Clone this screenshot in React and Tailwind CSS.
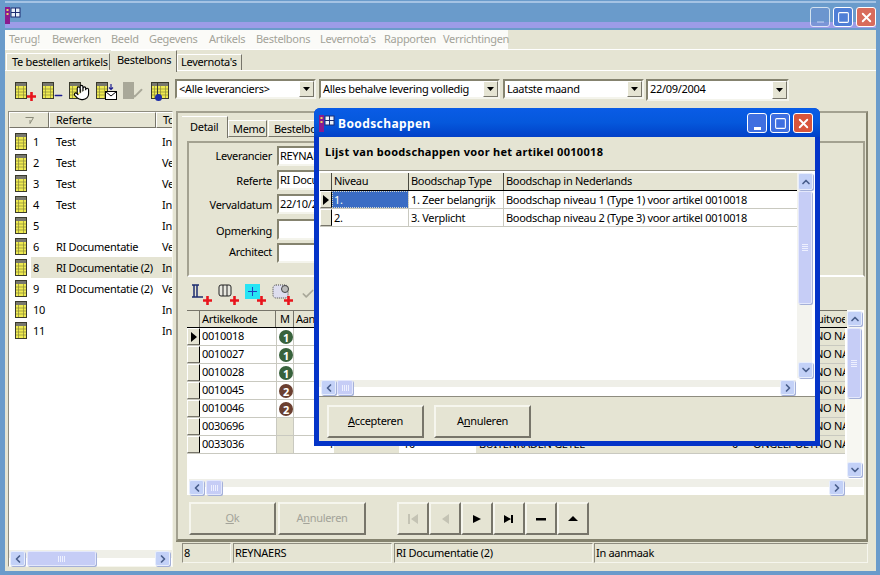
import { ChevronDown, ChevronLeft, ChevronRight, ChevronUp, Check, Hand, Minus, Square, X } from 'lucide-react';

const FACE = 'bg-[#e5e4d3]';
const RAISED = 'border border-t-white border-l-white border-r-[#77756a] border-b-[#77756a]';
const BUTTON = 'border-2 border-t-[#f6f6ee] border-l-[#f6f6ee] border-r-[#77756a] border-b-[#77756a] bg-[#e5e4d3]';
const SUNKEN = 'border border-t-[#8e8c7f] border-l-[#8e8c7f] border-b-[#f6f6ee] border-r-[#f6f6ee]';
const FIELD = 'border-2 border-t-[#85836f] border-l-[#85836f] border-b-[#f4f4ec] border-r-[#f4f4ec] bg-white';

function TableIcon({ className }) {
  return (
    <svg className={className} width="12" height="17" viewBox="0 0 12 17">
      <rect x="0.5" y="0.5" width="11" height="16" fill="#eeea50" stroke="#3a3a2c" />
      <rect x="1" y="1" width="10" height="3" fill="#77776e" />
      <path d="M3.5 4v12M8.5 4v12M1 7h10M1 10h10M1 13h10" stroke="#8a8a3a" strokeWidth="0.7" />
    </svg>
  );
}

function RedPlus({ className }) {
  return (
    <svg className={className} width="9" height="9" viewBox="0 0 9 9">
      <path d="M3.2 0h2.6v3.2H9v2.6H5.8V9H3.2V5.8H0V3.2h3.2z" fill="#e8141c" />
    </svg>
  );
}

function ScrollButton({ className, Icon }) {
  return (
    <div className={`absolute flex items-center justify-center rounded-[2px] border border-[#e8eefc] bg-[#c3d1f7] shadow-[1px_1px_0_#a4b0d8] ${className}`}>
      <Icon size={12} strokeWidth={3.4} className="text-[#4a5f8c]" />
    </div>
  );
}

function Thumb({ className, vertical }) {
  return (
    <div className={`absolute flex items-center justify-center gap-[1px] rounded-[2px] border border-[#e4e8fc] bg-[#c6cdf6] shadow-[1px_1px_0_#a4b0d8] ${vertical ? 'flex-col' : ''} ${className}`}>
      {[0, 1, 2, 3].map((i) => (
        <span key={i} className={`bg-[#eef0fe] ${vertical ? 'h-[1px] w-[6px]' : 'h-[6px] w-[1px]'}`} />
      ))}
    </div>
  );
}

function WinButton({ className, tone, children }) {
  return (
    <div className={`absolute flex h-[20px] w-[20px] items-center justify-center rounded-[3px] border border-white text-white ${tone} ${className}`}>
      {children}
    </div>
  );
}

function AppGlyph({ className }) {
  return (
    <svg className={className} width="16" height="17" viewBox="0 0 16 17">
      <rect x="0" y="0" width="5" height="17" fill="#8a1a8e" />
      <rect x="1.5" y="2" width="2" height="2" fill="#e6d060" />
      <rect x="1.5" y="6" width="2" height="2" fill="#e6d060" />
      <rect x="6" y="1" width="9" height="9" fill="#e8f0fa" stroke="#1c2c70" />
      <path d="M10.5 1v9M6 5.5h9" stroke="#1c2c70" />
    </svg>
  );
}

const Label = ({ className, children }) => <div className={`absolute whitespace-nowrap leading-[14px] ${className}`}>{children}</div>;

const LIST = [
  ['1', 'Test', 'In'],
  ['2', 'Test', 'Ve'],
  ['3', 'Test', 'Ve'],
  ['4', 'Test', 'In'],
  ['5', '', 'In'],
  ['6', 'RI Documentatie', 'Ve'],
  ['8', 'RI Documentatie (2)', 'In'],
  ['9', 'RI Documentatie (2)', 'Ve'],
  ['10', '', 'In'],
  ['11', '', 'In'],
];

const ARTICLES = [
  ['0010018', 1],
  ['0010027', 1],
  ['0010028', 1],
  ['0010045', 2],
  ['0010046', 2],
  ['0030696', 0],
  ['0033036', 0],
];

const MENU = ['Terug!', 'Bewerken', 'Beeld', 'Gegevens', 'Artikels', 'Bestelbons', "Levernota's", 'Rapporten', 'Verrichtingen'];

function Combo({ className, text }) {
  return (
    <div className={`absolute ${FIELD} ${className}`}>
      <div className="absolute left-[2px] top-[1px] leading-[14px]">{text}</div>
      <div className={`absolute bottom-[0px] right-[0px] top-[0px] flex w-[15px] items-center justify-center ${FACE} ${RAISED}`}>
        <svg width="7" height="4" viewBox="0 0 7 4"><path d="M0 0h7L3.5 4z" fill="#000" /></svg>
      </div>
    </div>
  );
}

function Nav({ className, disabled, d }) {
  return (
    <div className={`absolute top-[502px] flex h-[33px] w-[32px] items-center justify-center ${BUTTON} ${className}`}>
      <svg width="12" height="10" viewBox="0 0 12 10"><path d={d} fill={disabled ? '#c4c3b4' : '#000'} /></svg>
    </div>
  );
}

export default function App() {
  return (
    <div className="relative h-[575px] w-[880px] overflow-hidden whitespace-nowrap bg-[#e5e4d3] font-['Liberation_Sans',sans-serif] text-[11px] tracking-[-0.3px] text-black">
      {/* main window frame */}
      <div className="absolute left-0 top-0 h-[30px] w-[880px] bg-[#6a9bcb]" />
      <div className="absolute left-0 top-[1px] h-[2px] w-[880px] bg-[#a5c3e4]" />
      <div className="absolute left-0 top-[22px] h-[6px] w-[880px] bg-[#9c9ce8]" />
      <div className="absolute left-0 top-0 h-[575px] w-[5px] bg-[#6a9bcb]" />
      <div className="absolute right-0 top-0 h-[575px] w-[4px] bg-[#6a9bcb]" />
      <div className="absolute bottom-0 left-0 h-[4px] w-[880px] bg-[#6a9bcb]" />
      <AppGlyph className="absolute left-[5px] top-[7px]" />
      <WinButton className="left-[810px] top-[7px] border-[#7aa0d8] opacity-70" tone="bg-[#6d93d0]"><span className="mt-[10px] h-[2px] w-[7px] bg-[#a8c0e8]" /></WinButton>
      <WinButton className="left-[833px] top-[7px]" tone="bg-[#4f7fd6]"><Square size={13} strokeWidth={2} /></WinButton>
      <WinButton className="left-[856px] top-[7px]" tone="bg-[#d86c5c]"><X size={15} strokeWidth={3} /></WinButton>

      {/* menu */}
      <div className="absolute left-[5px] top-[30px] h-[19px] w-[503px] bg-[#fbfbf8]" />
      <div className="absolute left-[5px] top-[49px] h-[1px] w-[871px] bg-white" />
      {MENU.map((m, i) => (
        <Label
          key={m}
          className={`top-[32px] text-[#a3a399] ${['left-[9px]', 'left-[52px]', 'left-[111px]', 'left-[149px]', 'left-[209px]', 'left-[256px]', 'left-[320px]', 'left-[384px]', 'left-[443px]'][i]}`}
        >
          {m}
        </Label>
      ))}

      {/* top tabs */}
      <div className={`absolute left-[6px] top-[53px] h-[18px] w-[104px] ${RAISED}`}><span className="absolute left-[5px] top-[1px] leading-[14px]">Te bestellen artikels</span></div>
      <div className="absolute left-[111px] top-[50px] h-[22px] w-[66px] border-r border-r-[#77756a] border-t border-t-white"><span className="absolute left-[6px] top-[2px] leading-[14px]">Bestelbons</span></div>
      <div className={`absolute left-[177px] top-[54px] h-[17px] w-[65px] ${RAISED}`}><span className="absolute left-[3px] top-[0px] leading-[14px]">Levernota's</span></div>
      <div className="absolute left-[5px] top-[70px] h-[1px] w-[106px] bg-white" />
      <div className="absolute left-[177px] top-[70px] h-[1px] w-[699px] bg-white" />

      {/* toolbar */}
      <TableIcon className="absolute left-[15px] top-[82px]" />
      <RedPlus className="absolute left-[27px] top-[92px]" />
      <TableIcon className="absolute left-[42px] top-[82px]" />
      <Minus size={11} strokeWidth={3} className="absolute left-[53px] top-[90px] text-[#1c1c90]" />
      <TableIcon className="absolute left-[69px] top-[82px]" />
      <Hand size={17} fill="#fff" strokeWidth={1.6} className="absolute left-[73px] top-[84px] text-black" />
      <TableIcon className="absolute left-[96px] top-[82px]" />
      <svg className="absolute left-[105px] top-[84px]" width="12" height="17" viewBox="0 0 12 17">
        <path d="M6 0v5M4 3.5l2 2 2-2" stroke="#1c1c90" strokeWidth="1.2" fill="none" />
        <rect x="0.5" y="7.5" width="11" height="8" fill="#fff" stroke="#000" />
        <path d="M0.5 7.5l5.5 4.5 5.5-4.5" stroke="#000" fill="none" />
      </svg>
      <div className="absolute left-[123px] top-[82px] h-[17px] w-[11px] bg-[#a9a899]" />
      <Check size={15} strokeWidth={3} className="absolute left-[129px] top-[86px] text-[#a9a899]" />
      <TableIcon className="absolute left-[151px] top-[82px]" />
      <TableIcon className="absolute left-[157px] top-[82px]" />
      <div className="absolute left-[155px] top-[94px] h-[7px] w-[7px] rounded-full bg-[#1c2ca8]" />
      <Combo className="left-[175px] top-[79px] h-[20px] w-[141px]" text="<Alle leveranciers>" />
      <Combo className="left-[319px] top-[79px] h-[20px] w-[181px]" text="Alles behalve levering volledig" />
      <Combo className="left-[503px] top-[79px] h-[20px] w-[141px]" text="Laatste maand" />
      <Combo className="left-[646px] top-[79px] h-[22px] w-[143px]" text="22/09/2004" />

      {/* left list */}
      <div className={`absolute left-[8px] top-[111px] h-[456px] w-[165px] bg-white ${SUNKEN}`} />
      <div className={`absolute left-[9px] top-[112px] flex h-[16px] w-[163px] overflow-hidden ${FACE}`}>
        <div className={`flex w-[40px] shrink-0 items-center justify-center text-[#8a8a7a] ${RAISED}`}>
          <svg width="9" height="7" viewBox="0 0 9 7"><path d="M0.5 0.5h8L5 6.5V3" fill="none" stroke="#8a8a7a" /></svg>
        </div>
        <div className={`w-[107px] shrink-0 pl-[6px] leading-[14px] ${RAISED}`}>Referte</div>
        <div className={`w-[30px] shrink-0 pl-[6px] leading-[14px] ${RAISED}`}>Toestand</div>
      </div>
      <div className="absolute left-[9px] top-[131px] w-[163px] overflow-hidden">
        {LIST.map(([nr, ref, type]) => (
          <div key={nr} className="relative h-[21px] w-[163px] overflow-hidden">
            {nr === '8' && <div className={`absolute left-[22px] top-0 h-[21px] w-[141px] ${FACE}`} />}
            <TableIcon className="absolute left-[6px] top-[2px]" />
            <span className="absolute left-[24px] top-[4px] leading-[14px]">{nr}</span>
            <span className="absolute left-[47px] top-[4px] leading-[14px]">{ref}</span>
            <span className="absolute left-[153px] top-[4px] leading-[14px]">{type}</span>
          </div>
        ))}
      </div>
      <div className="absolute left-[9px] top-[550px] h-[8px] w-[163px] bg-[#efefe8]" />
      <ScrollButton className="left-[10px] top-[551px] h-[15px] w-[15px]" Icon={ChevronLeft} />
      <Thumb className="left-[27px] top-[551px] h-[15px] w-[69px]" />
      <ScrollButton className="left-[155px] top-[551px] h-[15px] w-[15px]" Icon={ChevronRight} />

      {/* right pane */}
      <div className="absolute left-[176px] top-[111px] h-[430px] w-[692px] border-2 border-t-[#a3a190] border-l-[#a3a190] border-r-[#85836f] border-b-[#85836f]" />
      <div className="absolute left-[182px] top-[116px] h-[22px] w-[46px] border-r border-r-[#77756a] border-t border-t-white"><span className="absolute left-[8px] top-[3px] leading-[14px]">Detail</span></div>
      <div className={`absolute left-[228px] top-[120px] h-[17px] w-[39px] ${RAISED}`}><span className="absolute left-[4px] top-[1px] leading-[14px]">Memo</span></div>
      <div className={`absolute left-[268px] top-[120px] h-[17px] w-[62px] ${RAISED}`}><span className="absolute left-[5px] top-[1px] leading-[14px]">Bestelbons</span></div>
      <div className="absolute left-[187px] top-[141px] h-[136px] w-[678px] border-2 border-t-[#a3a190] border-l-[#a3a190] border-r-[#a3a190] border-b-white" />
      <Label className="right-[608px] top-[149px]">Leverancier</Label>
      <Label className="right-[608px] top-[174px]">Referte</Label>
      <Label className="right-[608px] top-[198px]">Vervaldatum</Label>
      <Label className="right-[608px] top-[224px]">Opmerking</Label>
      <Label className="right-[608px] top-[245px]">Architect</Label>
      <div className={`absolute left-[277px] top-[146px] h-[20px] w-[50px] overflow-hidden pl-[1px] leading-[16px] ${FIELD}`}>REYNAERS</div>
      <div className={`absolute left-[277px] top-[170px] h-[20px] w-[50px] overflow-hidden pl-[1px] leading-[16px] ${FIELD}`}>RI Documentatie</div>
      <div className={`absolute left-[277px] top-[194px] h-[20px] w-[50px] overflow-hidden pl-[1px] leading-[16px] ${FIELD}`}>22/10/2004</div>
      <div className={`absolute left-[277px] top-[219px] h-[21px] w-[50px] ${FIELD}`} />
      <div className={`absolute left-[277px] top-[243px] h-[20px] w-[50px] ${FIELD}`} />

      {/* detail toolbar */}
      <svg className="absolute left-[191px] top-[284px]" width="13" height="14" viewBox="0 0 13 14">
        <path d="M1 1h7M1 13h11M3 1v12M6 1v12" stroke="#1c2c70" strokeWidth="1.5" fill="none" />
      </svg>
      <RedPlus className="absolute left-[203px] top-[296px]" />
      <svg className="absolute left-[218px] top-[284px]" width="14" height="14" viewBox="0 0 14 14">
        <rect x="1" y="1" width="12" height="11" rx="2" fill="#e8e8e0" stroke="#222" />
        <path d="M5 1v11M9 1v11" stroke="#222" />
      </svg>
      <RedPlus className="absolute left-[230px] top-[296px]" />
      <div className="absolute left-[245px] top-[284px] flex h-[15px] w-[15px] items-center justify-center bg-[#27e4f4]">
        <svg width="9" height="9" viewBox="0 0 9 9"><path d="M4.5 0v9M0 4.5h9" stroke="#2040c0" /></svg>
      </div>
      <RedPlus className="absolute left-[257px] top-[296px]" />
      <svg className="absolute left-[272px] top-[284px]" width="18" height="15" viewBox="0 0 18 15">
        <rect x="1" y="1" width="15" height="13" rx="3" fill="#dde" stroke="#444" strokeDasharray="1 1" />
        <circle cx="13" cy="5" r="3.5" fill="#bbb" stroke="#444" />
      </svg>
      <RedPlus className="absolute left-[284px] top-[296px]" />
      <Check size={14} strokeWidth={3} className="absolute left-[301px] top-[287px] text-[#a9a899]" />

      {/* article grid */}
      <div className="absolute left-[187px] top-[310px] h-[185px] w-[677px] bg-white" />
      <div className="absolute left-[187px] top-[310px] h-[1px] w-[660px] bg-[#77756a]" />
      <div className={`absolute left-[187px] top-[311px] flex h-[17px] w-[660px] overflow-hidden border-b border-b-black ${FACE}`}>
        <div className="h-[17px] w-[13px] shrink-0 border-r border-r-[#77756a]" />
        <div className="w-[76px] shrink-0 border-r border-r-[#77756a] pl-[2px] leading-[15px]">Artikelkode</div>
        <div className="w-[18px] shrink-0 border-r border-r-[#77756a] pl-[4px] leading-[15px]">M</div>
        <div className="w-[40px] shrink-0 pl-[2px] leading-[15px]">Aantal</div>
        <div className="absolute left-[625px] top-0 w-[33px] overflow-hidden pl-[5px] leading-[15px]">uitvoe</div>
      </div>
      <div className="absolute left-[187px] top-[328px] w-[658px] overflow-hidden">
        {ARTICLES.map(([code, m], i) => (
          <div key={code} className="relative h-[18px] w-[658px] border-b border-b-[#c9c9c0]">
            <div className={`absolute left-0 top-0 flex h-[17px] w-[13px] items-center justify-center border-r border-r-black ${FACE} ${RAISED}`}>
              {i === 0 && <svg width="6" height="10" viewBox="0 0 6 10"><path d="M0 0l6 5-6 5z" fill="#000" /></svg>}
            </div>
            <span className="absolute left-[15px] top-[1px] leading-[14px]">{code}</span>
            <div className={`absolute left-[89px] top-0 h-[17px] w-[18px] border-x border-x-[#c9c9c0] ${m ? 'bg-white' : FACE}`}>
              {m > 0 && (
                <div className={`absolute left-[2px] top-[2px] flex h-[14px] w-[14px] items-center justify-center rounded-full text-[11px] font-bold leading-none text-white ${m === 1 ? 'bg-[#38623c]' : 'bg-[#6b3f30]'}`}>{m}</div>
              )}
            </div>
            <div className={`absolute left-[147px] top-0 h-[17px] w-[65px] ${FACE}`} />
            <div className={`absolute left-[289px] top-0 h-[17px] w-[369px] ${FACE}`} />
            <span className="absolute left-[628px] top-[1px] w-[30px] overflow-hidden leading-[14px]">NO NA</span>
            {i === 6 && (
              <>
                <span className="absolute left-[141px] top-[1px] leading-[14px]">1</span>
                <span className="absolute left-[216px] top-[1px] leading-[14px]">10</span>
                <span className="absolute left-[292px] top-[1px] leading-[14px]">BUITENRADEN GETEL</span>
                <span className="absolute left-[545px] top-[1px] leading-[14px]">0</span>
                <span className="absolute left-[566px] top-[1px] w-[60px] overflow-hidden leading-[14px]">ONGELPOETIN</span>
              </>
            )}
          </div>
        ))}
      </div>
      <div className="absolute left-[847px] top-[311px] h-[166px] w-[15px] bg-[#f7f7f2]" />
      <ScrollButton className="left-[847px] top-[311px] h-[15px] w-[15px]" Icon={ChevronUp} />
      <Thumb vertical className="left-[847px] top-[328px] h-[70px] w-[14px]" />
      <ScrollButton className="left-[847px] top-[462px] h-[15px] w-[15px]" Icon={ChevronDown} />
      <div className="absolute left-[189px] top-[479px] h-[8px] w-[674px] bg-[#efefe8]" />
      <ScrollButton className="left-[189px] top-[480px] h-[15px] w-[15px]" Icon={ChevronLeft} />
      <Thumb className="left-[206px] top-[480px] h-[15px] w-[16px]" />
      <ScrollButton className="left-[829px] top-[480px] h-[15px] w-[15px]" Icon={ChevronRight} />

      {/* bottom buttons */}
      <div className={`absolute left-[189px] top-[502px] flex h-[33px] w-[87px] items-center justify-center text-[#a3a399] ${BUTTON}`}><span><u>O</u>k</span></div>
      <div className={`absolute left-[278px] top-[502px] flex h-[33px] w-[88px] items-center justify-center text-[#a3a399] ${BUTTON}`}><span>A<u>n</u>nuleren</span></div>
      <Nav className="left-[397px]" disabled d="M1 0h2v10H1zM4 5l7-5v10z" />
      <Nav className="left-[429px]" disabled d="M3 5l7-5v10z" />
      <Nav className="left-[461px]" d="M2 1l8 4-8 4z" />
      <Nav className="left-[493px]" d="M1 1l7 4-7 4zM8 1h2v8H8z" />
      <Nav className="left-[525px]" d="M1 4h10v2.5H1z" />
      <Nav className="left-[557px]" d="M6 2l5 5H1z" />

      {/* status bar */}
      <div className="absolute left-[176px] top-[541px] h-[1px] w-[692px] bg-[#85836f]" />
      {[
        ['left-[182px] w-[49px]', '8'],
        ['left-[233px] w-[159px]', 'REYNAERS'],
        ['left-[394px] w-[199px]', 'RI Documentatie (2)'],
        ['left-[594px] w-[274px]', 'In aanmaak'],
      ].map(([pos, text]) => (
        <div key={text} className={`absolute top-[543px] h-[20px] pl-[1px] leading-[18px] ${SUNKEN} ${pos}`}>{text}</div>
      ))}

      {/* dialog */}
      <div className="absolute left-[314px] top-[108px] h-[338px] w-[506px] rounded-t-[6px] bg-[#0434c8]">
        <div className="absolute left-0 top-0 h-[29px] w-[506px] rounded-t-[6px] bg-gradient-to-b from-[#0a5ce6] via-[#0558dc] to-[#0340c8]" />
        <AppGlyph className="absolute left-[5px] top-[7px]" />
        <div className="absolute left-[24px] top-[8px] text-[12px] font-bold leading-[16px] tracking-[0.4px] text-white">Boodschappen</div>
        <WinButton className="left-[433px] top-[5px]" tone="bg-[#3f6fe0]"><span className="mt-[10px] h-[3px] w-[7px] bg-white" /></WinButton>
        <WinButton className="left-[456px] top-[5px]" tone="bg-[#3f6fe0]"><Square size={13} strokeWidth={2} /></WinButton>
        <WinButton className="left-[479px] top-[5px]" tone="bg-[#d8553c]"><X size={15} strokeWidth={3} /></WinButton>

        <div className={`absolute left-[5px] top-[29px] h-[304px] w-[496px] ${FACE}`}>
          <div className="absolute left-[6px] top-[8px] text-[11px] font-bold leading-[14px] tracking-[0.3px]">Lijst van boodschappen voor het artikel 0010018</div>
          <div className="absolute left-0 top-[33px] h-[1px] w-[496px] bg-[#8e8c7f]" />
          <div className="absolute left-0 top-[34px] h-[226px] w-[496px] bg-white" />
          <div className={`absolute left-[1px] top-[36px] flex h-[18px] w-[477px] border-b border-b-black ${FACE}`}>
            <div className="h-[17px] w-[12px] shrink-0 border-r border-r-[#4a4a40]" />
            <div className="w-[77px] shrink-0 border-r border-r-[#4a4a40] pl-[2px] leading-[16px]">Niveau</div>
            <div className="w-[95px] shrink-0 border-r border-r-[#4a4a40] pl-[2px] leading-[16px]">Boodschap Type</div>
            <div className="w-[292px] shrink-0 pl-[2px] leading-[16px]">Boodschap in Nederlands</div>
          </div>
          <div className="absolute left-[1px] top-[54px] w-[477px]">
            {[
              ['1.', '1. Zeer belangrijk', 'Boodschap niveau 1 (Type 1) voor artikel 0010018'],
              ['2.', '3. Verplicht', 'Boodschap niveau 2 (Type 3) voor artikel 0010018'],
            ].map(([a, b, c], i) => (
              <div key={a} className="flex h-[18px] border-b border-b-[#c9c9c0]">
                <div className={`flex h-[17px] w-[12px] shrink-0 items-center justify-center border-r border-r-black ${FACE} ${RAISED}`}>
                  {i === 0 && <svg width="6" height="10" viewBox="0 0 6 10"><path d="M0 0l6 5-6 5z" fill="#000" /></svg>}
                </div>
                <div className={`w-[77px] shrink-0 border-r border-r-[#c9c9c0] pl-[2px] leading-[17px] ${i === 0 ? 'bg-[#3a6cc4] text-white outline-1 -outline-offset-1 outline-dotted outline-[#d8d8c8]' : ''}`}>{a}</div>
                <div className="w-[95px] shrink-0 border-r border-r-[#c9c9c0] pl-[2px] leading-[17px]">{b}</div>
                <div className="w-[292px] shrink-0 pl-[2px] leading-[17px]">{c}</div>
              </div>
            ))}
          </div>
          <div className="absolute left-[478px] top-[36px] h-[205px] w-[15px] bg-[#f3f3ee]" />
          <ScrollButton className="left-[479px] top-[36px] h-[17px] w-[15px]" Icon={ChevronUp} />
          <Thumb vertical className="left-[479px] top-[54px] h-[113px] w-[14px]" />
          <ScrollButton className="left-[479px] top-[225px] h-[16px] w-[15px]" Icon={ChevronDown} />
          <div className="absolute left-0 top-[243px] h-[7px] w-[477px] bg-[#efefe8]" />
          <ScrollButton className="left-[2px] top-[243px] h-[15px] w-[15px]" Icon={ChevronLeft} />
          <Thumb className="left-[18px] top-[243px] h-[15px] w-[16px]" />
          <ScrollButton className="left-[461px] top-[243px] h-[15px] w-[15px]" Icon={ChevronRight} />
          <div className="absolute left-0 top-[259px] h-[1px] w-[496px] bg-[#8e8c7f]" />
          <div className={`absolute left-[8px] top-[268px] flex h-[33px] w-[97px] items-center justify-center ${BUTTON}`}><span><u>A</u>ccepteren</span></div>
          <div className={`absolute left-[115px] top-[268px] flex h-[33px] w-[97px] items-center justify-center ${BUTTON}`}><span>A<u>n</u>nuleren</span></div>
        </div>
      </div>
    </div>
  );
}
